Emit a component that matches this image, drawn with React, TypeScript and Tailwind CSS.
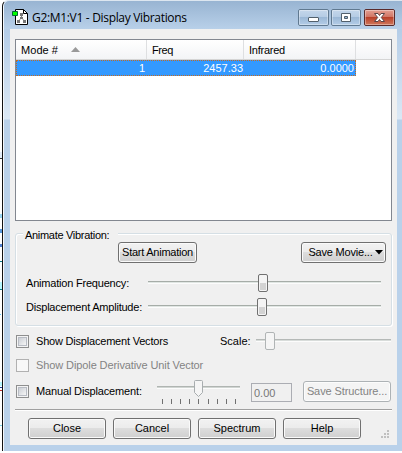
import React from 'react';

export default function App() {
  return (
    <div className="relative flex h-[453px] w-[402px] flex-col overflow-hidden bg-white text-[11px] leading-[13px] text-black [font-family:'Liberation_Sans',Arial,sans-serif]">
      <Backdrop />
      <div className="relative ml-[2px] flex h-[451px] flex-col rounded-tl-[6px] border-l border-t border-l-[#111] border-t-[#dce6f0] bg-[linear-gradient(#b5cde7,#b5cde7_30px,#dbe8f5_118px,#b9d1ea_119px)] pl-[7px] pr-[5px] shadow-[inset_1px_1px_0_#f4f8fc]">
        <TitleBar />
        <div className="flex h-[416px] flex-col bg-[#f0f0f0] pl-[5px] pr-[5px] pt-[10px]">
          <ModeTable />
          <AnimateGroup />
          <Options />
          <div className="mt-[6px] h-[2px] shrink-0 border-b border-white bg-[#a0a0a0]" />
          <Footer />
        </div>
      </div>
    </div>
  );
}

// slivers of the window lying behind the dialog
function Backdrop() {
  return (
    <svg className="absolute left-0 top-0" width="4" height="453" shapeRendering="crispEdges">
      <rect x="0" y="152" width="2" height="7" fill="#e5eef8" />
      <rect x="0" y="158" width="2" height="1" fill="#333" />
      <rect x="0" y="214" width="2" height="4" fill="#9bd8f5" />
      <rect x="0" y="229" width="2" height="4" fill="#5898dc" />
      <rect x="0" y="244" width="2" height="3" fill="#5080d0" />
      <rect x="0" y="261" width="2" height="1" fill="#087f8c" />
      <rect x="0" y="282" width="2" height="7" fill="#b8f8ff" />
      <rect x="0" y="289" width="2" height="1" fill="#087f8c" />
      <rect x="0" y="314" width="1" height="1" fill="#60c8ff" />
      <rect x="0" y="382" width="2" height="4" fill="#b8f8ff" />
      <rect x="0" y="387" width="2" height="1" fill="#2040a0" />
      <rect x="0" y="390" width="2" height="1" fill="#c03030" />
      <rect x="0" y="425" width="2" height="1" fill="#80d8e8" />
    </svg>
  );
}

function TitleBar() {
  return (
    <div className="-ml-[6px] -mr-[5px] flex h-[28px] shrink-0 items-start rounded-tl-[5px] bg-linear-to-b from-[#98b4d2] to-[#b8d0e9] pl-[8px] pr-[6px]">
      <svg className="mt-[8px] shrink-0" width="16" height="16" viewBox="0 0 16 16">
        <path d="M3.500.5h8l4 4v11h-12z" fill="#fff" stroke="#000" />
        <path d="M11.500.5v4h4" fill="none" stroke="#000" />
        <path d="M9.500 5v4M9 9l-3 4M10 9l3 4" stroke="#888" />
        <path d="M8 4h3v3H8zM8 8h3v2H8zM5 11h3v3H5zM11 11h3v3h-3z" fill="#777" />
        <path d="M.5 2.500h5v4h-5z" fill="#0f0" stroke="#063" />
      </svg>
      <div className="ml-[4px] mt-[9px] whitespace-nowrap text-[12px] leading-[15px] tracking-[-0.32px] [font-family:'Open_Sans','Noto_Sans',sans-serif]">
        G2:M1:V1 - Display Vibrations
      </div>
      <svg className="ml-auto mt-[8px] shrink-0" width="98" height="18" viewBox="0 0 98 18">
        <defs>
          <linearGradient id="glass" x2="0" y2="1">
            <stop offset="0" stopColor="#c5d7eb" />
            <stop offset=".48" stopColor="#b4cbe4" />
            <stop offset=".5" stopColor="#9bb8d6" />
            <stop offset="1" stopColor="#b5cee8" />
          </linearGradient>
          <linearGradient id="red" x2="0" y2="1">
            <stop offset="0" stopColor="#e5a295" />
            <stop offset=".48" stopColor="#d07463" />
            <stop offset=".5" stopColor="#b94029" />
            <stop offset="1" stopColor="#d17c60" />
          </linearGradient>
        </defs>
        <rect x=".5" y=".5" width="30" height="16" rx="1.500" fill="url(#glass)" stroke="#607990" />
        <rect x="33.500" y=".5" width="29" height="16" rx="1.500" fill="url(#glass)" stroke="#607990" />
        <rect x="66.500" y=".5" width="30" height="16" rx="1.500" fill="url(#red)" stroke="#5a2b2b" />
        <path d="M1.500 15.500v-14h28v14zM34.500 15.500v-14h27v14zM67.500 15.500v-14h28v14z" fill="none" stroke="#fff" strokeOpacity=".35" />
        <rect x="10.500" y="8.500" width="10" height="4" rx=".5" fill="#fff" stroke="#52606c" />
        <path d="M43.500 4.500h9v8h-9zM46.500 7.500h3v2h-3z" fill="#fff" fillRule="evenodd" stroke="#52606c" />
        <path d="M76.500 4.500h3.500l1.500 2 1.500-2h3.500l-3.200 4 3.200 4H83l-1.500-2-1.500 2h-3.500l3.200-4z" fill="#fff" stroke="#5b4548" />
      </svg>
    </div>
  );
}

function ModeTable() {
  return (
    <div className="h-[182px] w-[377px] shrink-0 border border-[#828790] bg-white">
      <div className="flex h-[20px] border-b border-[#d5d5d5] bg-linear-to-b from-white to-[#f3f4f6] leading-[20px]">
        <div className="flex w-[131px] border-r border-[#dedfe1] pl-[5px]">
          <span className="tracking-[0.05px]">Mode #</span>
          <svg className="ml-[13px] mt-[7px]" width="9" height="5">
            <path d="M0 5 4.500 0 9 5z" fill="#999" />
          </svg>
        </div>
        <div className="w-[97px] border-r border-[#dedfe1] pl-[5px] tracking-[-0.4px]">Freq</div>
        <div className="w-[112px] border-r border-[#dedfe1] pl-[5px] tracking-[-0.25px]">Infrared</div>
      </div>
      <div className="flex h-[16px] w-[340px] border border-dotted border-[#c66a1e] bg-[#3399ff] text-right leading-[14px] text-white">
        <div className="w-[128px]">1</div>
        <div className="w-[98px]">2457.33</div>
        <div className="w-[111px]">0.0000</div>
      </div>
    </div>
  );
}

function AnimateGroup() {
  return (
    <fieldset className="relative mt-[12px] h-[93px] w-[377px] shrink-0 rounded-[3px] border border-[#d5dfe5] pl-[9px] shadow-[inset_1px_1px_0_white,1px_1px_0_white]">
      <div className="absolute -top-[6px] left-[7px] bg-[#f0f0f0] pl-[2px] pr-[9px] leading-[14px] tracking-[-0.3px]">Animate Vibration:</div>
      <div className="mt-[8px] flex">
        <Button className="ml-[93px] w-[79px] tracking-[-0.25px]">Start Animation</Button>
        <Button className="ml-[104px] w-[85px] gap-[2px] pl-[4px] tracking-[-0.2px]">
          Save Movie...
          <svg width="8" height="5"><path d="M0 0h8L4 4.500z" fill="#000" /></svg>
        </Button>
      </div>
      <div className="mt-[8px] flex h-[24px] items-center">
        <span className="w-[123px] whitespace-nowrap pl-[1px] tracking-[-0.2px]">Animation Frequency:</span>
        <Slider width={233} value={110} />
      </div>
      <div className="flex h-[24px] items-center">
        <span className="w-[123px] whitespace-nowrap pl-[1px] tracking-[-0.22px]">Displacement Amplitude:</span>
        <Slider width={233} value={109} />
      </div>
    </fieldset>
  );
}

function Options() {
  return (
    <div className="mt-[3px] flex w-[377px] shrink-0 flex-col pl-[1px]">
      <div className="flex h-[24px] items-center">
        <Checkbox />
        <span className="ml-[7px] w-[184px] whitespace-nowrap tracking-[-0.2px]">Show Displacement Vectors</span>
        <span className="w-[36px]">Scale:</span>
        <Slider width={135} value={9} disabled />
      </div>
      <div className="flex h-[24px] items-center text-[#838383]">
        <Checkbox disabled />
        <span className="ml-[7px] whitespace-nowrap tracking-[-0.1px]">Show Dipole Derivative Unit Vector</span>
      </div>
      <div className="flex h-[26px] items-center pt-[2px]">
        <Checkbox />
        <span className="ml-[7px] w-[121px] whitespace-nowrap tracking-[-0.15px]">Manual Displacement:</span>
        <TickSlider />
        <div className="ml-[11px] mt-[2px] h-[19px] w-[41px] border border-[#abadb3] pl-[2px] leading-[18px] text-[#777]">0.00</div>
        <Button disabled className="ml-[11px] mt-[1px] w-[88px] tracking-[-0.1px]">Save Structure...</Button>
      </div>
    </div>
  );
}

function Footer() {
  return (
    <div className="flex gap-[7px] pl-[13px] pt-[7px]">
      {['Close', 'Cancel', 'Spectrum', 'Help'].map(label => (
        <Button key={label} className="w-[78px]">{label}</Button>
      ))}
      <svg className="ml-[13px] mt-[12px]" width="9" height="9" shapeRendering="crispEdges">
        <path d="M6 0h2v2H6zM3 3h2v2H3zM6 3h2v2H6zM0 6h2v2H0zM3 6h2v2H3zM6 6h2v2H6z" fill="#c0c0c0" />
      </svg>
    </div>
  );
}

function Button({ children, className = '', disabled }: { children: React.ReactNode; className?: string; disabled?: boolean }) {
  const base = 'flex h-[21px] shrink-0 items-center justify-center whitespace-nowrap rounded-[3px] border leading-[19px]';
  const on = 'border-[#707070] bg-[linear-gradient(#f2f2f2,#ebebeb_50%,#dddddd_50%,#cfcfcf)] shadow-[inset_0_0_0_1px_#fafafa]';
  const off = 'border-[#adb2b5] bg-[#f4f4f4] text-[#838383] shadow-[inset_0_0_0_1px_#fcfcfc]';
  return <button disabled={disabled} className={`${base} ${disabled ? off : on} ${className}`}>{children}</button>;
}

function Checkbox({ disabled }: { disabled?: boolean }) {
  if (disabled) return <div className="mt-[1px] h-[13px] w-[13px] shrink-0 border border-[#b1b1b1] bg-[#f8f8f8]" />;
  return (
    <div className="mt-[1px] h-[13px] w-[13px] shrink-0 border border-[#8e8f8f] bg-[#f4f4f4] p-[1px]">
      <div className="h-[9px] w-[9px] border border-[#b8bcc4] bg-linear-to-br from-[#cbcfd5] to-[#f6f6f6]" />
    </div>
  );
}

function Slider({ width, value, disabled }: { width: number; value: number; disabled?: boolean }) {
  return (
    <svg className="shrink-0" width={width} height="20" shapeRendering="crispEdges">
      <path d={`M0 8.500h${width}`} stroke={disabled ? '#b5b9b7' : '#a6ada8'} />
      <path d={`M0 9.500h${width}`} stroke={disabled ? '#d8dcda' : '#e0e6e3'} />
      <path d={`M0 10.500h${width}`} stroke="#fcfcfc" />
      <g transform={`translate(${value} 1)`} shapeRendering="auto">
        <rect x=".5" y=".5" width="9" height="17" rx="1.500" fill={disabled ? '#f5f5f5' : '#f4f4f4'} stroke={disabled ? '#b0b4b5' : '#707070'} />
        {!disabled && <path d="M2 9h6v7H2z" fill="#d3d3d3" />}
      </g>
    </svg>
  );
}

function TickSlider() {
  return (
    <svg className="shrink-0" width="83" height="26">
      <path d="M0 8.500h83" stroke="#b0b5b2" />
      <path d="M0 9.500h83" stroke="#d0d5d2" />
      <path d="M0 10.500h83" stroke="#fcfcfc" />
      <path d="M38.500 2.500h6q1 0 1 1v11l-4 4-4-4v-11q0-1 1-1z" fill="#f5f5f5" stroke="#a8adaf" />
      {[5, 14, 23, 32, 41, 51, 60, 69, 78].map(x => (
        <path key={x} d={`M${x + 0.5} 21v5`} stroke="#707070" />
      ))}
    </svg>
  );
}
